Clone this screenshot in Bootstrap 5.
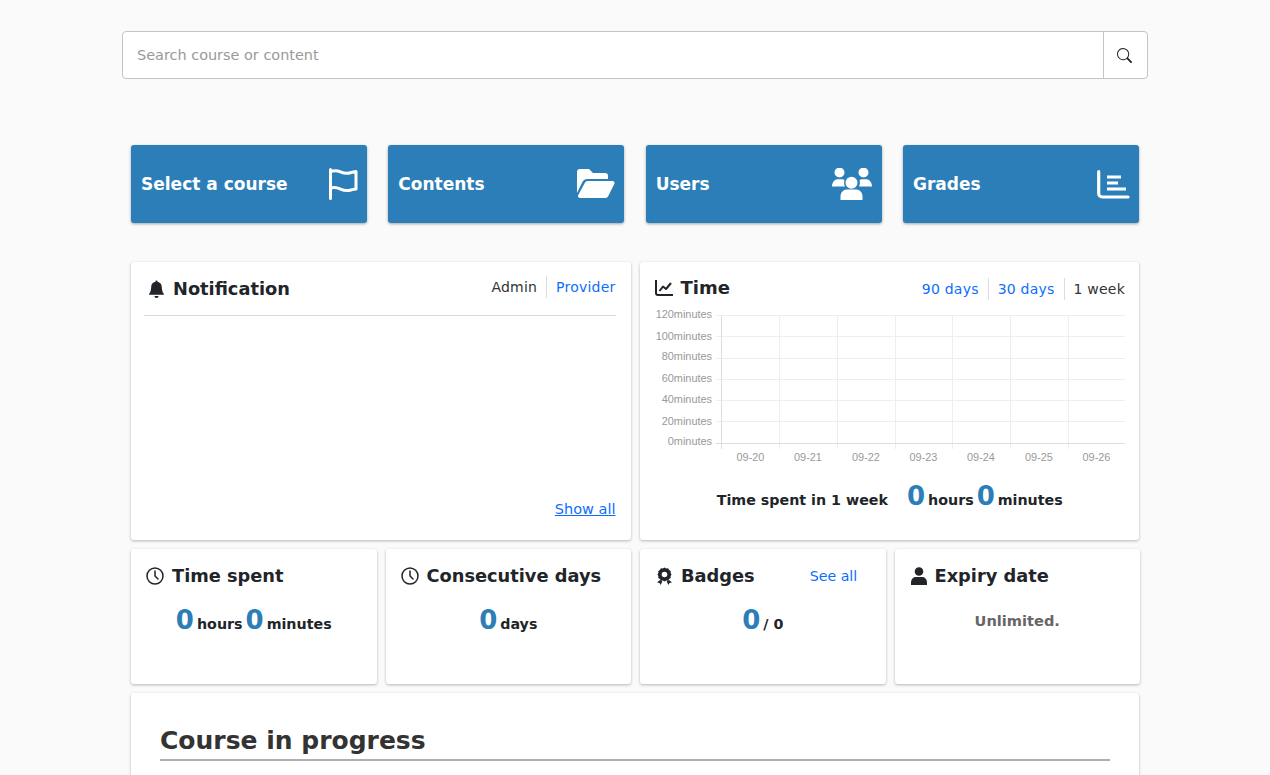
<!DOCTYPE html>
<html lang="en">
<head>
<meta charset="utf-8">
<title>Dashboard</title>
<link href="https://cdn.jsdelivr.net/npm/bootstrap@5.3.0/dist/css/bootstrap.min.css" rel="stylesheet">
<style>
html,body{height:775px;overflow:hidden}
body{background:#fafafa;font-family:"DejaVu Sans",Verdana,sans-serif;color:#212529}
.page-wrap{width:1026px;margin:0 auto;padding-top:31px}
.search-input{height:48px;font-size:14.45px;padding-left:14px;border-color:#c4c4c4;border-radius:4px}
.search-input::placeholder{color:#999}
.search-btn{width:45px;background:#fff;border:1px solid #c4c4c4;border-radius:0 4px 4px 0;display:flex;align-items:center;justify-content:center;padding:0 2px 0 0}
.inner{padding:0 9px}
.tiles{--bs-gutter-x:21.33px;margin-top:66px}
.tile{height:78px;background:#2b7eb8;color:#fff;border-radius:3px;box-shadow:0 1px 3px rgba(0,0,0,.35);display:flex;align-items:center;justify-content:space-between;padding:2px 9px 0 10px;font-weight:700;font-size:17px;text-decoration:none}
.tile svg{margin-top:-2px}
.panels{--bs-gutter-x:9px;margin-top:39px}
.smalls{--bs-gutter-x:9px;margin-top:9px;margin-right:-5.5px}
.panel-box{background:#fff;border-radius:3px;box-shadow:0 1px 3px rgba(0,0,0,.28)}
.tall{height:278px;padding:0 15px 0 13px;position:relative}
.tall-time{padding:0 14px 0 15px}
.short{height:135px;padding:15px 15px 0 15px}
.ttl{font-size:17.8px;font-weight:700;color:#212529;line-height:24px;margin:0;display:flex;align-items:center}
.hdr-a{height:54px;border-bottom:1px solid #d8d8d8;padding-left:4px;padding-bottom:1px}
.hdr-a .ttl{padding-top:1px}
.hdr-a .mini{margin-top:-2px}
.hdr-b{height:44px;padding-top:8px}
.hdr-b .ttl{font-size:18px;margin-top:-1px}
.hdr-b .mini{margin-top:1px}
.mini{font-size:14px;color:#333;letter-spacing:.22px}
.mini a,.see{color:#0d6efd;text-decoration:none}
.mini>span,.mini>a{padding:0 9px;border-left:1px solid #ddd;line-height:22px;display:inline-block}
.mini>:first-child{border-left:0}
.mini>:last-child{padding-right:0}
.first-link{padding-left:0!important}
.foot-link{position:absolute;right:15px;bottom:19px;font-size:14.5px;color:#0d6efd}
.stat{font-weight:700;font-size:14.25px;color:#212529;line-height:36px;white-space:nowrap}
.stat-row{margin-top:14px;padding-left:3px}
.stat-time{margin-top:-1px;padding-left:3px}
.num{color:#2b7eb8;font-size:26px;font-weight:700;line-height:36px}
.unit{margin:0 3px 0 3px}
.lead-text{margin-right:19px}
.unlimited{font-weight:700;font-size:14.6px;color:#666;text-align:center;margin-top:22px}
.progress-box{margin-top:9px;height:90px;padding:30px 29px 0}
.progress-ttl{font-size:25px;font-weight:700;color:#333;line-height:35px;margin:0;border-bottom:2px solid #b0b0b0;padding-bottom:3px;height:38px}
.chart{display:block;margin:0}
.chart text{font-family:"Liberation Sans",Arial,sans-serif;font-size:10.9px;fill:#999}
.see-all{font-size:14.2px;margin-left:55px;margin-top:2px}
.badge-ico{margin-left:2px;margin-right:9px}
.user-ico{margin-left:1px}
</style>
</head>
<body>
<div class="page-wrap">
  <div class="input-group">
    <input type="text" class="form-control search-input" placeholder="Search course or content">
    <button class="search-btn" type="button" aria-label="Search">
      <svg width="15" height="15" viewBox="0 0 16 16" fill="#212529"><path d="M11.742 10.344a6.500 6.500 0 1 0-1.397 1.398h-.001c.03.04.062.078.098.115l3.850 3.850a1 1 0 0 0 1.415-1.414l-3.850-3.850a1.007 1.007 0 0 0-.115-.1zM12 6.500a5.500 5.500 0 1 1-11 0 5.500 5.500 0 0 1 11 0z"/></svg>
    </button>
  </div>
  <div class="inner">
    <div class="row tiles">
      <div class="col-3"><a class="tile" href="#"><span>Select a course</span>
        <svg width="30" height="32" viewBox="0 0 30 32" fill="none" stroke="#fff" stroke-width="3" stroke-linecap="round" stroke-linejoin="round"><path d="M2.500 1.500v29"/><path d="M2.500 3.500c3.500-1.200 7-1 10 .3s7 1.700 10 .9 4-1.200 5.500-1.200v17.500c-2.500 0-3.500.8-6 1.300s-6.500.2-9.500-1.200-7-1.800-10-1"/></svg></a></div>
      <div class="col-3"><a class="tile" href="#"><span>Contents</span>
        <svg width="38" height="30" viewBox="0 0 38 30" fill="#fff"><path d="M0 24V3a3 3 0 0 1 3-3h9l4 4h12a3 3 0 0 1 3 3v3H10a5 5 0 0 0-4.500 2.800z"/><path d="M10.500 12H35.500a2 2 0 0 1 1.800 2.900L31 27.500a3.500 3.500 0 0 1-3 1.500H3a2 2 0 0 1-1.700-3L8 13.500a3 3 0 0 1 2.500-1.500z"/></svg></a></div>
      <div class="col-3"><a class="tile" href="#"><span>Users</span>
        <svg width="41" height="33" viewBox="0 0 41 33" fill="#fff"><circle cx="7.500" cy="4.500" r="5"/><circle cx="31.500" cy="4.500" r="5"/><circle cx="19.500" cy="14.800" r="6"/><path d="M0 18.500c0-4 2.500-7.300 5.500-7.300h3.500c1.800 0 2.800.4 3.500 1-.7 2-.5 4.500.5 6.300z"/><path d="M40 18.500c0-4-2.500-7.300-5.500-7.300h-3.500c-1.800 0-2.800.4-3.500 1 .7 2 .5 4.500-.5 6.300z"/><path d="M8.500 32v-3.500c0-4 3-7 6-7h10c3 0 6 3 6 7V32z"/></svg></a></div>
      <div class="col-3"><a class="tile" href="#"><span>Grades</span>
        <svg width="33" height="29" viewBox="0 0 33 29" fill="none" stroke="#fff" stroke-linecap="round"><path d="M1.700 1.700v21.800a3.500 3.500 0 0 0 3.500 3.500H31" stroke-width="3.200"/><path d="M10 7h14M10 13h11M10 19h19" stroke-width="3" stroke-linecap="butt"/></svg></a></div>
    </div>

    <div class="row panels">
      <div class="col-6">
        <div class="panel-box tall">
          <div class="d-flex justify-content-between align-items-center hdr-a">
            <h2 class="ttl"><svg class="me-2" width="17" height="18" viewBox="0 0 16 17" fill="#212529"><path d="M8 17a2 2 0 0 0 2-2H6a2 2 0 0 0 2 2zm.995-15.400a1 1 0 1 0-1.990 0A5 5 0 0 0 3 6.500c0 1.098-.5 5.500-2 6.500v1h14v-1c-1.500-1-2-5.400-2-6.500 0-2.420-1.720-4.440-4.005-4.900z"/></svg>Notification</h2>
            <div class="mini"><span>Admin</span><a href="#">Provider</a></div>
          </div>
          <a class="foot-link" href="#">Show all</a>
        </div>
      </div>
      <div class="col-6">
        <div class="panel-box tall tall-time">
          <div class="d-flex justify-content-between align-items-center hdr-b">
            <h2 class="ttl"><svg class="me-2" width="18" height="16" viewBox="0 0 18 16" fill="none" stroke="#212529" stroke-width="2"><path d="M1 0v13a2 2 0 0 0 2 2h15"/><path d="M4.500 11l3.500-4.500 3 2.500 5-6" stroke-linejoin="round"/></svg>Time</h2>
            <div class="mini"><a class="first-link" href="#">90 days</a><a href="#">30 days</a><span>1 week</span></div>
          </div>
          <svg class="chart" width="485" height="173" viewBox="655 306 485 173">
            <g stroke="#eee" stroke-width="1" fill="none">
              <path d="M716 315.500H1125M716 336.500H1125M716 358.500H1125M716 379.500H1125M716 400.500H1125M716 421.500H1125"/>
              <path d="M779.500 315V449M837.500 315V449M895.500 315V449M952.500 315V449M1010.500 315V449M1068.500 315V449"/>
            </g>
            <path d="M721.500 315V449M716 443.500H1125" stroke="#ddd" fill="none"/>
            <g text-anchor="end">
              <text x="712" y="318">120minutes</text><text x="712" y="340">100minutes</text><text x="712" y="360">80minutes</text><text x="712" y="382">60minutes</text><text x="712" y="403">40minutes</text><text x="712" y="425">20minutes</text><text x="712" y="445">0minutes</text>
            </g>
            <g text-anchor="middle">
              <text x="750.500" y="461">09-20</text><text x="808" y="461">09-21</text><text x="866" y="461">09-22</text><text x="923.500" y="461">09-23</text><text x="981" y="461">09-24</text><text x="1039" y="461">09-25</text><text x="1096.500" y="461">09-26</text>
            </g>
          </svg>
          <div class="stat text-center stat-time"><span class="lead-text">Time spent in 1 week</span><span class="num">0</span><span class="unit">hours</span><span class="num">0</span><span class="unit">minutes</span></div>
        </div>
      </div>
    </div>

    <div class="row smalls">
      <div class="col-3"><div class="panel-box short">
        <h3 class="ttl"><svg class="me-2" width="18" height="18" viewBox="0 0 18 18" fill="none" stroke="#212529" stroke-width="1.500"><circle cx="9" cy="9" r="8"/><path d="M9 4v5l3 3" stroke-linecap="round"/></svg>Time spent</h3>
        <div class="stat text-center stat-row"><span class="num">0</span><span class="unit">hours</span><span class="num">0</span><span class="unit">minutes</span></div>
      </div></div>
      <div class="col-3"><div class="panel-box short">
        <h3 class="ttl"><svg class="me-2" width="18" height="18" viewBox="0 0 18 18" fill="none" stroke="#212529" stroke-width="1.500"><circle cx="9" cy="9" r="8"/><path d="M9 4v5l3 3" stroke-linecap="round"/></svg>Consecutive days</h3>
        <div class="stat text-center stat-row"><span class="num">0</span><span class="unit">days</span></div>
      </div></div>
      <div class="col-3"><div class="panel-box short">
        <div class="d-flex align-items-center">
          <h3 class="ttl"><svg class="badge-ico" width="15" height="18" viewBox="0 0 15 18" fill="#212529"><path fill-rule="evenodd" d="M7.500.5l1.700.9 1.900-.1 1 1.600 1.600 1 -.1 1.900.9 1.700-.9 1.700.1 1.900-1.600 1-1 1.600-1.900-.1-1.700.9-1.700-.9-1.900.1-1 -1.600-1.600-1 .1-1.900L.5 7.500l.9-1.700-.1-1.900 1.600-1 1-1.600 1.900.1zM7.500 4.700a2.800 2.800 0 1 0 0 5.600 2.800 2.800 0 0 0 0-5.600z"/><path d="M0 15.500l3-2.500 2.300 1.200L3.700 18l-1.200-2zM15 15.500L12 13l-2.300 1.200L11.300 18l1.200-2z"/></svg>Badges</h3>
          <a class="see see-all" href="#">See all</a>
        </div>
        <div class="stat text-center stat-row"><span class="num">0</span><span class="unit">/ 0</span></div>
      </div></div>
      <div class="col-3"><div class="panel-box short">
        <h3 class="ttl"><svg class="me-2 user-ico" width="16" height="18" viewBox="0 0 16 18" fill="#212529"><circle cx="8" cy="4.500" r="4.300"/><path d="M0 18v-2.500C0 12 2.500 10 5 10h6c2.500 0 5 2 5 5.500V18z"/></svg>Expiry date</h3>
        <div class="unlimited">Unlimited.</div>
      </div></div>
    </div>

    <div class="panel-box progress-box">
      <h2 class="progress-ttl">Course in progress</h2>
    </div>
  </div>
</div>
</body>
</html>
